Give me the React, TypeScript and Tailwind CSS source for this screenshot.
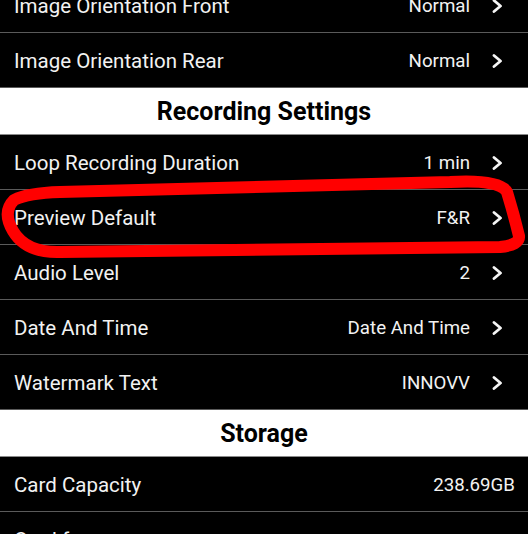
import React from 'react';

type Row = { label: string; value: string; arrow?: boolean };

const Chevron = () => (
  <svg width="11" height="14" viewBox="0 0 11 14" className="ml-[22px] shrink-0">
    <path d="M2 1.5 L8.5 7 L2 12.5" fill="none" stroke="#f5f5f5" strokeWidth="2.8" strokeLinecap="round" strokeLinejoin="round" />
  </svg>
);

const SettingRow = ({ label, value, arrow = true }: Row) => (
  <div className={`flex h-[55px] items-center justify-between border-b border-[#5a5a5a] pl-[14px] pt-[3px] ${arrow ? 'pr-[25px]' : 'pr-[13px]'}`}>
    <span className="text-[20.5px] text-[#f2f2f2]">{label}</span>
    <div className="flex items-center">
      <span className="text-[18.7px] text-[#f2f2f2]">{value}</span>
      {arrow && <Chevron />}
    </div>
  </div>
);

const Header = ({ title }: { title: string }) => (
  <div className="flex h-[47px] items-center justify-center border-b border-[#8a8a8a] bg-white pt-[2px]">
    <span className="text-[25px] font-bold text-black">{title}</span>
  </div>
);

const App = () => {
  return (
    <div className="relative h-[534px] w-[528px] overflow-hidden bg-black" style={{ fontFamily: 'Roboto, "Noto Sans", sans-serif' }}>
      <div className="-mt-[22px] flex flex-col">
        <SettingRow label="Image Orientation Front" value="Normal" />
        <SettingRow label="Image Orientation Rear" value="Normal" />
        <Header title="Recording Settings" />
        <SettingRow label="Loop Recording Duration" value="1 min" />
        <SettingRow label="Preview Default" value="F&R" />
        <SettingRow label="Audio Level" value="2" />
        <SettingRow label="Date And Time" value="Date And Time" />
        <SettingRow label="Watermark Text" value="INNOVV" />
        <Header title="Storage" />
        <SettingRow label="Card Capacity" value="238.69GB" arrow={false} />
        <SettingRow label="Card free space" value="" arrow={false} />
      </div>
      {/* hand drawn marker around Preview Default */}
      <svg className="pointer-events-none absolute left-0 top-0" width="528" height="534" viewBox="0 0 528 534">
        <path
          d="M60 192 C150 190 300 186 450 182 Q500 179 507 192 Q514 215 519 236 Q520 245 500 247 C350 249 200 250 60 252 Q26 253 13 231 Q2 212 14 200 Q28 193 60 192 Z"
          fill="none"
          stroke="#ff0000"
          strokeWidth="12"
          strokeLinejoin="round"
        />
      </svg>
    </div>
  );
};

export default App;
